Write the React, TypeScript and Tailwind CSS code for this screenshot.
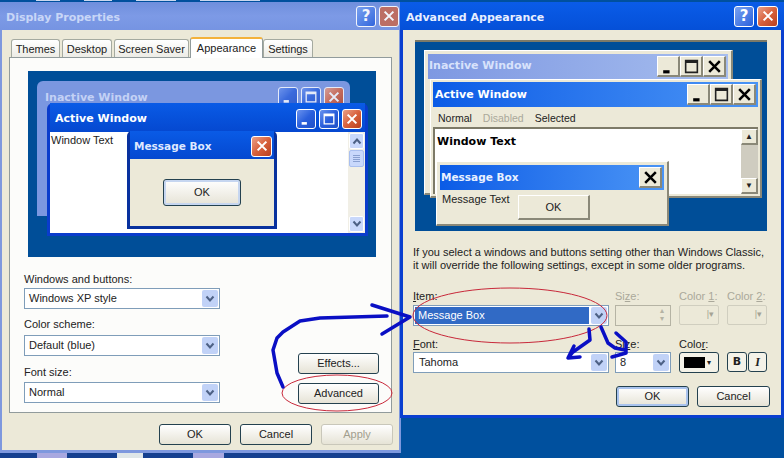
import type { ReactNode } from 'react'

const ui = 'font-["Liberation_Sans",sans-serif]'
const bold = 'font-["DejaVu_Sans",sans-serif] font-bold'

// XP caption button glyphs
function Glyph({ kind, color = 'white', large }: { kind: 'min' | 'max' | 'close'; color?: string; large?: boolean }) {
  return (
    <svg viewBox="0 0 16 16" className={large ? 'h-[17px] w-[17px]' : 'h-[14px] w-[14px]'} fill="none" stroke={color}>
      {kind === 'min' && <path d="M3 13h6" strokeWidth="3" />}
      {kind === 'max' && <path d="M2.5 2.5h11v11h-11zM2.5 4h11" strokeWidth="1.5" />}
      {kind === 'close' && <path d="M3 3l10 10M13 3L3 13" strokeWidth="2.4" />}
    </svg>
  )
}

function XpButton({ kind, size = 20, red, faded }: { kind: 'min' | 'max' | 'close'; size?: number; red?: boolean; faded?: boolean }) {
  const tone = red
    ? 'from-[#e8a088] via-[#d8613c] to-[#b8401e]'
    : 'from-[#6a92ee] via-[#2a5fdc] to-[#2050c8]'
  return (
    <span
      style={{ width: size, height: size }}
      className={`flex shrink-0 items-center justify-center rounded-[3px] border border-white bg-linear-to-br ${tone} ${faded ? 'opacity-70' : ''}`}
    >
      <Glyph kind={kind} />
    </span>
  )
}

function HelpButton() {
  return (
    <span className={`flex h-[21px] w-[20px] items-center justify-center rounded-[3px] border border-white bg-linear-to-br from-[#7aa2f0] to-[#2a5fdc] text-[15px] leading-none text-white ${bold}`}>
      ?
    </span>
  )
}

function ClassicCaptionButton({ kind }: { kind: 'min' | 'max' | 'close' }) {
  return (
    <span className="flex h-[21px] w-[23px] shrink-0 items-center justify-center border-t border-l border-b-2 border-r-2 border-t-white border-l-white border-b-[#8a8878] border-r-[#8a8878] bg-[#ece9d8]">
      <Glyph kind={kind} color={kind === 'max' ? '#222' : 'black'} large />
    </span>
  )
}

function DropArrow({ disabled }: { disabled?: boolean }) {
  return (
    <span className={`flex w-[16px] shrink-0 items-center justify-center rounded-[2px] ${disabled ? 'bg-[#e8e8e0]' : 'bg-[#c1d2f7]'}`}>
      <svg viewBox="0 0 10 8" className="h-[8px] w-[10px]" fill="none" stroke="#4d6185" strokeWidth="2">
        <path d="M1.5 1.5L5 5.5l3.5-4" />
      </svg>
    </span>
  )
}

function Combo({ value, selected, className = '' }: { value: string; selected?: boolean; className?: string }) {
  return (
    <div className={`flex h-[21px] border border-[#7f9db9] bg-white p-[1px] ${className}`}>
      <span className={`flex-1 truncate pl-[3px] text-[11px] leading-[17px] ${selected ? 'mr-[2px] bg-[#316ac5] text-white' : 'text-[#222]'}`}>
        {value}
      </span>
      <DropArrow />
    </div>
  )
}

function PushButton({ label, className = '', disabled, focused }: { label: string; className?: string; disabled?: boolean; focused?: boolean }) {
  return (
    <div
      className={`flex items-center justify-center rounded-[3px] border bg-linear-to-b from-white to-[#e6e3d6] text-[11px] ${
        disabled ? 'border-[#c9c7ba] text-[#a19e8e]' : 'border-[#24414f] text-[#222]'
      } ${focused ? 'shadow-[inset_0_0_0_2px_#a9c3ee]' : ''} ${className}`}
    >
      {label}
    </div>
  )
}

function Tab({ label, active, className = '' }: { label: string; active?: boolean; className?: string }) {
  return (
    <div
      className={`flex items-center justify-center rounded-t-[3px] border border-b-0 text-[11px] text-[#222] ${
        active
          ? 'z-10 h-[21px] border-[#919b9c] border-t-2 border-t-[#f3b23c] bg-white'
          : 'h-[19px] border-[#a5aaa0] bg-linear-to-b from-white to-[#ecebe4]'
      } ${className}`}
    >
      {label}
    </div>
  )
}

function Field({ label, children, className = '', dim, labelHeight = 'h-[16px]' }: { label: ReactNode; children: ReactNode; className?: string; dim?: boolean; labelHeight?: string }) {
  return (
    <div className={className}>
      <div className={`${labelHeight} text-[11px] leading-[16px] whitespace-nowrap ${dim ? 'text-[#aaa89a]' : 'text-[#222]'}`}>{label}</div>
      {children}
    </div>
  )
}

function DisplayProperties() {
  return (
    <div className="absolute top-[2px] left-0 flex h-[451px] w-[401px] flex-col rounded-t-[6px] bg-[#7e98de]">
      <div className="flex h-[28px] shrink-0 items-center justify-between bg-linear-to-b from-[#6f8fdd] via-[#7d9ae6] to-[#7694e2] pt-[4px] pr-[2px] pl-[6px]">
        <span className={`text-[11px] text-[#c8d6f7] ${bold}`}>Display Properties</span>
        <div className="-mt-[4px] flex gap-[3px] opacity-90">
          <HelpButton />
          <span className="flex h-[21px] w-[20px] items-center justify-center rounded-[3px] border border-white bg-[#c46a58]">
            <Glyph kind="close" />
          </span>
        </div>
      </div>
      <div className="mx-[2px] mb-[3px] flex flex-1 flex-col bg-[#ece9d8] px-[7px]">
        <div className="flex h-[28px] items-end pl-[2px]">
          <Tab label="Themes" className="mr-[2px] w-[49px]" />
          <Tab label="Desktop" className="mr-[2px] w-[50px]" />
          <Tab label="Screen Saver" className="mr-[1px] w-[75px]" />
          <Tab label="Appearance" active className="w-[73px]" />
          <Tab label="Settings" className="w-[50px]" />
        </div>
        <div className="-mt-px flex h-[356px] flex-col border border-[#919b9c] bg-[#fcfcfa] px-[18px] pt-[13px]">
          <DesktopPreview />
          <div className="mt-[14px] flex justify-between">
            <div className="-ml-[4px] flex w-[196px] flex-col gap-[7px]">
              <Field label="Windows and buttons:" labelHeight="h-[17px]"><Combo value="Windows XP style" /></Field>
              <Field label="Color scheme:" labelHeight="h-[19px]"><Combo value="Default (blue)" /></Field>
              <Field label="Font size:" labelHeight="h-[18px]" className="mt-px"><Combo value="Normal" /></Field>
            </div>
            <div className="-mr-[6px] -mb-[1px] flex w-[81px] flex-col justify-end gap-[9px]">
              <PushButton label="Effects..." className="h-[21px]" />
              <PushButton label="Advanced" className="h-[21px]" />
            </div>
          </div>
        </div>
        <div className="mt-[11px] -mr-[1px] flex justify-end gap-[9px]">
          <PushButton label="OK" className="h-[21px] w-[72px]" />
          <PushButton label="Cancel" className="h-[21px] w-[72px]" />
          <PushButton label="Apply" className="h-[21px] w-[72px]" disabled />
        </div>
      </div>
    </div>
  )
}

function DesktopPreview() {
  return (
    <div className="relative h-[186px] w-[348px] shrink-0 bg-[#004e98]">
      {/* inactive window */}
      <div className="absolute top-[10px] left-[9px] h-[135px] w-[313px] rounded-t-[6px] bg-[#7b97e0] p-[4px]">
        <div className="flex h-[24px] items-center justify-between pl-[4px]">
          <span className={`pt-[2px] text-[11px] text-[#c3d1f5] ${bold}`}>Inactive Window</span>
          <div className="flex gap-[3px] pr-[2px] opacity-80">
            <XpButton kind="min" />
            <XpButton kind="max" />
            <XpButton kind="close" red />
          </div>
        </div>
      </div>
      {/* active window */}
      <div className="absolute top-[32px] left-[19px] flex h-[133px] w-[321px] flex-col rounded-t-[6px] bg-[#0a3ccc] p-[3px] pt-0">
        <div className="flex h-[29px] items-center justify-between bg-linear-to-b from-[#0a5be6] to-[#0548d0] pt-[2px] pr-[3px] pl-[5px]">
          <span className={`pt-[2px] text-[11px] text-white ${bold}`}>Active Window</span>
          <div className="flex gap-[3px]">
            <XpButton kind="min" />
            <XpButton kind="max" />
            <XpButton kind="close" red />
          </div>
        </div>
        <div className="relative flex flex-1 bg-white">
          <span className="flex-1 pt-px pl-[1px] text-[11px] leading-[14px] text-[#222]">Window Text</span>
          <div className="flex w-[17px] flex-col gap-[1px] bg-[#f1efe6] p-[1px]">
            <ScrollThumb up />
            <span className="flex h-[17px] flex-col items-center justify-center gap-[1px] rounded-[2px] border border-[#a9bfef] bg-[#c9d8fb]">
              <i className="h-px w-[7px] bg-[#8aa0d0]" />
              <i className="h-px w-[7px] bg-[#8aa0d0]" />
              <i className="h-px w-[7px] bg-[#8aa0d0]" />
              <i className="h-px w-[7px] bg-[#8aa0d0]" />
            </span>
            <span className="flex-1" />
            <ScrollThumb />
          </div>
          {/* message box */}
          <div className="absolute top-[-1px] left-[77px] flex h-[98px] w-[150px] flex-col rounded-t-[5px] bg-[#08319e] px-[3px] pb-[3px]">
            <div className="flex h-[28px] shrink-0 items-center justify-between bg-linear-to-b from-[#0a5be6] to-[#0548d0] pt-[2px] pr-[2px] pl-[4px]">
              <span className={`pt-[2px] text-[10.5px] text-[#dfe8ff] ${bold}`}>Message Box</span>
              <XpButton kind="close" red size={21} />
            </div>
            <div className="flex flex-1 items-center justify-center bg-[#ece9d8]">
              <PushButton label="OK" className="h-[27px] w-[78px] border-[#1c3f6e] shadow-[inset_0_0_0_2px_#c6d6f0]" />
            </div>
          </div>
        </div>
      </div>
    </div>
  )
}

function ScrollThumb({ up }: { up?: boolean }) {
  return (
    <span className="flex h-[16px] items-center justify-center rounded-[2px] border border-white bg-[#c9d8fb]">
      <svg viewBox="0 0 10 8" className="h-[8px] w-[10px]" fill="none" stroke="#4d6185" strokeWidth="2">
        <path d={up ? 'M1.5 6.5L5 2.5l3.5 4' : 'M1.5 1.5L5 5.5l3.5-4'} />
      </svg>
    </span>
  )
}

const raised = 'border-t border-l border-b-2 border-r-2 border-t-white border-l-white border-b-[#8a8878] border-r-[#8a8878]'

function ClassicPreview() {
  return (
    <div className="relative h-[191px] w-[352px] shrink-0 border-t-2 border-[#7d7a68] bg-[#004e98]">
      {/* inactive */}
      <div className={`absolute top-[8px] left-[9px] h-[145px] w-[309px] bg-[#ece9d8] p-[3px] ${raised}`}>
        <div className="flex h-[25px] items-center justify-between bg-linear-to-r from-[#7e98e2] to-[#a6bdee] pr-[2px] pl-[1px]">
          <span className={`text-[11px] text-[#d8e2fb] ${bold}`}>Inactive Window</span>
          <div className="flex">
            <ClassicCaptionButton kind="min" />
            <ClassicCaptionButton kind="max" />
            <ClassicCaptionButton kind="close" />
          </div>
        </div>
      </div>
      {/* active */}
      <div className={`absolute top-[37px] left-[15px] flex h-[119px] w-[332px] flex-col bg-[#ece9d8] p-[2px] ${raised}`}>
        <div className="flex h-[25px] shrink-0 items-center justify-between bg-linear-to-r from-[#0a5be6] to-[#4a94f5] pr-[2px] pl-[2px]">
          <span className={`pt-[2px] text-[11px] text-white ${bold}`}>Active Window</span>
          <div className="flex">
            <ClassicCaptionButton kind="min" />
            <ClassicCaptionButton kind="max" />
            <ClassicCaptionButton kind="close" />
          </div>
        </div>
        <div className="flex h-[20px] shrink-0 items-center gap-[11px] pt-[3px] pl-[5px] text-[10.5px] text-[#222]">
          <span>Normal</span>
          <span className="text-[#aaa89a]">Disabled</span>
          <span>Selected</span>
        </div>
        <div className="relative flex flex-1 border-t-2 border-l-2 border-t-[#7d7a68] border-l-[#7d7a68] bg-white">
          <span className={`flex-1 pt-[3px] pl-[2px] text-[11px] leading-[20px] text-black ${bold}`}>Window Text</span>
          <div className="flex w-[17px] flex-col bg-[#cfccc0]">
            <span className={`flex h-[16px] items-center justify-center bg-[#ece9d8] text-[8px] leading-none ${raised}`}>▲</span>
            <span className="flex-1" />
            <span className={`flex h-[16px] items-center justify-center bg-[#ece9d8] text-[8px] leading-none ${raised}`}>▼</span>
          </div>
        </div>
      </div>
      {/* message box */}
      <div className={`absolute top-[119px] left-[21px] flex h-[65px] w-[233px] flex-col bg-[#ece9d8] p-[3px] ${raised}`}>
        <div className="flex h-[25px] shrink-0 items-center justify-between bg-linear-to-r from-[#0a5be6] to-[#4a94f5] pr-[2px] pl-[1px]">
          <span className={`text-[10.5px] text-[#eaf1ff] ${bold}`}>Message Box</span>
          <ClassicCaptionButton kind="close" />
        </div>
        <div className="flex items-start pt-px pl-[2px] text-[11px] text-[#222]">
          <span className="w-[76px]">Message Text</span>
          <span className={`mt-[4px] flex h-[25px] w-[72px] items-center justify-center ${raised}`}>OK</span>
        </div>
      </div>
    </div>
  )
}

function DisabledBox() {
  return (
    <div className="flex h-[20px] items-center justify-end rounded-[2px] border border-[#d0cebf] pr-[4px] text-[9px] text-[#a5a394]">
      |▾
    </div>
  )
}

function AdvancedAppearance() {
  return (
    <div className="absolute top-[2px] left-[400px] flex h-[416px] w-[384px] flex-col rounded-t-[6px] bg-[#0a3fd0]">
      <div className="flex h-[28px] shrink-0 items-center justify-between bg-linear-to-b from-[#0a5ce8] to-[#0550d8] pr-[6px] pl-[6px]">
        <span className={`pt-[4px] text-[11px] text-[#e8efff] ${bold}`}>Advanced Appearance</span>
        <div className="flex gap-[3px]">
          <HelpButton />
          <XpButton kind="close" red size={21} />
        </div>
      </div>
      <div className="mx-[3px] mb-[3px] flex flex-1 flex-col bg-[#ece9d8] px-[12px] pt-[10px] text-[#222]">
        <ClassicPreview />
        <p className="mt-[15px] -ml-[2px] w-[370px] text-[11px] leading-[13px] whitespace-nowrap">
          If you select a windows and buttons setting other than Windows Classic,
          <br />
          it will override the following settings, except in some older programs.
        </p>
        <div className="mt-[16px] -ml-[2px] flex gap-[6px]">
          <Field label={<><u>I</u>tem:</>} labelHeight="h-[17px]" className="w-[196px]"><Combo value="Message Box" selected /></Field>
          <Field label={<>Si<u>z</u>e:</>} labelHeight="h-[17px]" dim className="w-[56px]">
            <div className="flex h-[21px] justify-end border border-[#b5b3a4] p-[1px] text-[8px] leading-[8px] text-[#b5b3a4]"><span className="w-[14px] text-center">▴<br />▾</span></div>
          </Field>
          <Field label={<>Color <u>1</u>:</>} labelHeight="h-[17px]" dim className="ml-[2px] w-[40px]"><DisabledBox /></Field>
          <Field label={<>Color <u>2</u>:</>} labelHeight="h-[17px]" dim className="ml-[2px] w-[40px]"><DisabledBox /></Field>
        </div>
        <div className="mt-[10px] -ml-[2px] flex gap-[6px]">
          <Field label={<><u>F</u>ont:</>} className="w-[196px]"><Combo value="Tahoma" className="[&>span:first-child]:pl-[4px]" /></Field>
          <Field label={<>Si<u>z</u>e:</>} className="w-[56px]"><Combo value="8" /></Field>
          <Field label={<>Colo<u>r</u>:</>} className="ml-[2px] w-[40px]">
            <div className="flex h-[21px] items-center gap-[2px] rounded-[3px] border border-[#24414f] bg-[#f4f2e8] px-[4px]">
              <span className="h-[11px] w-[21px] bg-black" />
              <span className="text-[8px]">▾</span>
            </div>
          </Field>
          <div className="ml-[2px] flex items-end gap-[1px] pb-px">
            <span className={`flex h-[20px] w-[20px] items-center justify-center rounded-[3px] border border-[#24414f] bg-[#f4f2e8] text-[11px] ${bold}`}>B</span>
            <span className="flex h-[20px] w-[19px] items-center justify-center rounded-[3px] border border-[#24414f] bg-[#f4f2e8] font-['Liberation_Serif',serif] text-[12px] font-bold italic">I</span>
          </div>
        </div>
        <div className="mt-[13px] -mr-[1px] flex justify-end gap-[8px]">
          <PushButton label="OK" focused className="h-[21px] w-[73px] border-[#1c3f6e]" />
          <PushButton label="Cancel" className="h-[21px] w-[73px]" />
        </div>
      </div>
    </div>
  )
}

// hand-drawn annotations on top of the screenshot
function Annotations() {
  return (
    <svg className="pointer-events-none absolute inset-0 z-20 h-[458px] w-[784px]" viewBox="0 0 784 458" fill="none">
      <ellipse cx="337" cy="393" rx="55" ry="18" stroke="#c8283a" />
      <ellipse cx="510" cy="315.5" rx="97" ry="27.5" stroke="#c8283a" />
      <g stroke="#0a0fc4" strokeWidth="3.5" strokeLinecap="round" strokeLinejoin="round">
        <path d="M283 387L277 373L273 350L277 338L283 332L300 321L320 318L387 316" />
        <path d="M372 305L410 317L382 334" />
        <path d="M589 329L590 340L573 352L568 358L580 357M574 346L568 358" />
        <path d="M601 327L608 343L615 348L625 350L626 353L612 357M616 333L626 342L626 353" />
      </g>
    </svg>
  )
}

export default function App() {
  return (
    <div className={`relative h-[458px] w-[784px] overflow-hidden bg-[#00509e] ${ui}`}>
      {/* bits of the desktop showing round the dialogs */}
      <div className="absolute top-0 left-0 flex h-[1px] w-[400px] gap-[24px] pl-[36px]">
        <i className="h-full w-[24px] bg-[#cbd8ee]" />
        <i className="h-full w-[28px] bg-[#cbd8ee]" />
        <i className="h-full w-[40px] bg-[#cbd8ee]" />
        <i className="h-full w-[60px] bg-[#cbd8ee]" />
      </div>
      <div className="absolute top-[453px] left-0 flex h-[5px] w-[400px] gap-[50px] bg-[#15408f] pl-[37px]">
        <i className="h-full w-[30px] bg-[#a8a8e0]" />
        <i className="h-full w-[26px] bg-[#dfe6e8]" />
        <i className="h-full w-[31px] bg-[#a8a8e0]" />
      </div>
      <DisplayProperties />
      <AdvancedAppearance />
      <Annotations />
    </div>
  )
}
